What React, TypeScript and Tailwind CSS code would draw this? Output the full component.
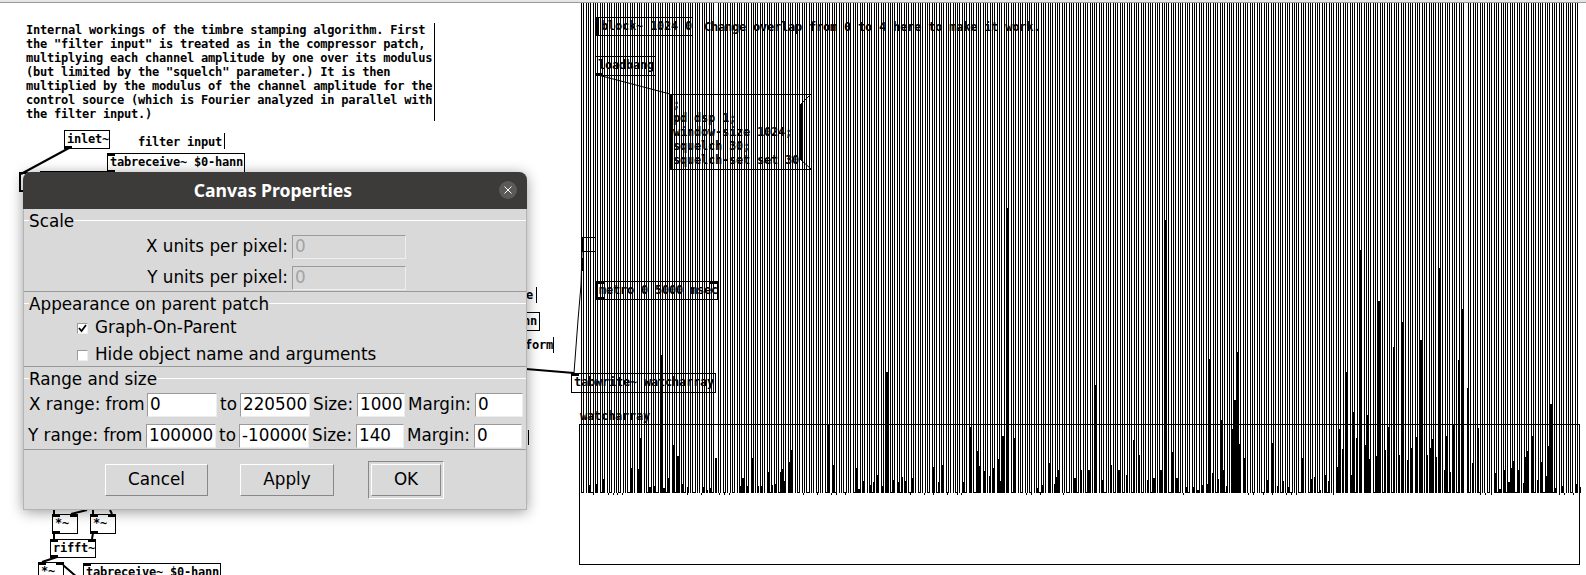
import { ReactNode } from "react";

// bars read off the reference: [x, top, width] in screen pixels
const tallBars: number[][] = [
  [660, 355, 2], [827, 424, 3], [886, 372, 3], [1006, 208, 3], [1095, 385, 2], [1164, 220, 3], [1208, 359, 2], [1234, 400, 2],
  [1236, 352, 2], [1346, 372, 2], [1352, 412, 2], [1359, 250, 3], [1366, 415, 2], [1378, 301, 2], [1379, 411, 2], [1393, 347, 2],
  [1401, 322, 3], [1420, 340, 2], [1439, 268, 2], [1458, 360, 2], [1462, 309, 2], [1467, 388, 2], [1550, 404, 2],
  [1074, 478, 2], [1080, 470, 2], [1088, 470, 2], [1102, 480, 2], [1110, 465, 2], [1118, 470, 2], [1126, 475, 2], [1133, 440, 2],
  [1138, 455, 2], [1147, 480, 2], [1153, 478, 2], [1160, 470, 2], [1172, 452, 2], [1176, 478, 2],
];

// same thing measured on the 3x crop at (570,410)
const leftBars: number[][] = [
  [58, 225], [75, 222], [100, 207], [183, 175], [200, 178], [210, 84], [238, 232], [252, 228], [280, 235],
  [295, 205], [310, 105], [322, 138], [337, 222], [352, 232], [395, 232], [407, 240], [421, 235], [434, 212],
  [436, 145], [506, 228], [517, 205], [532, 228], [547, 145], [560, 228], [574, 228], [590, 185], [602, 225],
  [616, 222], [630, 185], [632, 178], [643, 212], [657, 155], [659, 120], [785, 165], [855, 175], [865, 237],
  [880, 212], [897, 225], [908, 215], [922, 195], [935, 228], [965, 210], [980, 215], [992, 202], [1006, 212],
  [1022, 205], [1090, 172], [1103, 215], [1117, 165], [1175, 215], [1200, 50], [1217, 123], [1228, 168],
  [1243, 182], [1256, 198], [1270, 175], [1282, 148], [1286, 212], [1297, 78], [1328, 84], [1397, 235],
  [1412, 225], [1438, 160], [1452, 222], [1456, 200], [1465, 180],
];

// and on the 3x crop at (1180,380)
const rightBars: number[][] = [
  [14, 322], [40, 322], [52, 330], [67, 315], [80, 312], [95, 278], [110, 297], [120, 120], [125, 270], [137, 318],
  [152, 148], [165, 60], [178, 192], [193, 235], [262, 300], [277, 190], [290, 318], [305, 302], [320, 322],
  [362, 235], [390, 297], [403, 292], [416, 330], [431, 285], [445, 303], [470, 262], [473, 148], [485, 207],
  [512, 285], [515, 95], [527, 175], [553, 195], [557, 105], [568, 238], [584, 228], [598, 92], [612, 210],
  [625, 140], [640, 285], [653, 225], [680, 240], [694, 205], [708, 170], [737, 225], [750, 205], [752, 178],
  [764, 232], [792, 270], [795, 168], [806, 275], [820, 133], [833, 200], [862, 278], [875, 250], [890, 145],
  [945, 278], [958, 327], [972, 270], [985, 305], [990, 265], [1000, 243], [1012, 270], [1028, 310], [1032, 232],
  [1042, 212], [1056, 168], [1070, 300], [1084, 245], [1098, 288], [1100, 198], [1111, 72], [1126, 323],
  [1142, 318], [1184, 312], [1196, 320],
];

const ticksLeft = [70, 113, 128, 142, 155, 350, 392, 448, 462, 476, 698, 740, 783, 797, 825, 1020, 1062, 1090, 1132, 1160, 1172, 1367, 1382, 1410, 1480];
const ticksRight = [10, 205, 220, 248, 275, 317, 332, 347, 458, 900, 915, 932, 1137, 1152, 1180];

const bars = [
  ...tallBars,
  ...leftBars.map(([x, y]) => [570 + x / 3, 410 + y / 3, 2]),
  ...rightBars.map(([x, y]) => [1180 + x / 3, 380 + y / 3, 2]),
];

const lines = Array.from({ length: 430 }, (_, i) => Math.round(581 + i * 2.322)).filter(
  (x) => !(x > 714 && x < 718) && !(x > 1463 && x < 1467)
);

const Waveform = () => (
  <svg className="absolute left-0 top-0" width="1586" height="575" shapeRendering="crispEdges">
    {lines.map((x) => (
      <rect key={x} x={x} y={3} width={1} height={490} fill="#000" />
    ))}
    {lines.map((x, i) =>
      i % 4 === 0 ? <rect key={x} x={x} y={492} width={3} height={1} fill="#000" /> : null
    )}
    {bars.map(([x, y, w], i) => (
      <rect key={i} x={Math.round(x)} y={Math.round(y)} width={w} height={493 - Math.round(y)} fill="#000" />
    ))}
    {ticksLeft.map((x) => (
      <rect key={x} x={Math.round(570 + x / 3)} y={493} width={1} height={2} fill="#000" />
    ))}
    {ticksRight.map((x) => (
      <rect key={x} x={Math.round(1180 + x / 3)} y={493} width={1} height={2} fill="#000" />
    ))}
  </svg>
);

const Wires = () => (
  <svg className="absolute left-0 top-0" width="1586" height="575" fill="none" stroke="#000">
    <path d="M69 148 L21 174" strokeWidth="2" />
    <path d="M40 172 H108" strokeWidth="2" />
    <path d="M526 369 L574 373" strokeWidth="2" />
    <path d="M598 75 L670 94" strokeWidth="1" />
    <path d="M583 258 V271" strokeWidth="2" />
    <path d="M574 373 L578 320 L581 285 L582 252" strokeWidth="1" />
    <path d="M54 510 V514 M71 514 L87 510 M93 510 V514 M110 510 L112 514" strokeWidth="2" />
    <path d="M54 533 V539 M93 533 L92 539 M57 557 L42 562 M63 565 L78 578" strokeWidth="2" />
  </svg>
);

const Obj = ({ className, children }: { className: string; children?: ReactNode }) => (
  <div
    className={`absolute border border-black px-[2px] font-['DejaVu_Sans_Mono',monospace] text-[12px] font-bold leading-[17px] whitespace-pre tracking-[-0.22px] text-black ${className}`}
  >
    {children}
  </div>
);

const Nub = ({ className }: { className: string }) => (
  <span className={`absolute h-[3px] w-[7px] bg-black ${className}`} />
);

const Note = ({ className, children }: { className: string; children: ReactNode }) => (
  <div
    className={`absolute font-['DejaVu_Sans_Mono',monospace] text-[12px] font-bold leading-[14px] whitespace-pre tracking-[-0.22px] text-black ${className}`}
  >
    {children}
  </div>
);

const Patch = () => (
  <>
    <Note className="left-[26px] top-[23px] h-[98px] w-[409px] border-r border-black">
      {`Internal workings of the timbre stamping algorithm. First
the "filter input" is treated as in the compressor patch,
multiplying each channel amplitude by one over its modulus
(but limited by the "squelch" parameter.) It is then
multiplied by the modulus of the channel amplitude for the
control source (which is Fourier analyzed in parallel with
the filter input.)`}
    </Note>
    <Obj className="left-[64px] top-[130px] h-[19px] w-[46px]">
      inlet~
      <Nub className="-bottom-px left-0" />
    </Obj>
    <Note className="left-[138px] top-[133px] h-[16px] w-[87px] border-r border-black leading-[18px]">filter input</Note>
    <Obj className="left-[107px] top-[153px] h-[20px] w-[138px]">
      tabreceive~ $0-hann
      <Nub className="-top-px left-0" />
      <Nub className="-bottom-px left-0" />
    </Obj>
    <Obj className="left-[19px] top-[172px] h-[20px] w-[30px] border-2">*~</Obj>

    <Note className="left-[523px] top-[287px] h-[16px] w-[14px] border-r border-black pl-[3px] leading-[16px]">e</Note>
    <Obj className="left-[510px] top-[312px] h-[19px] w-[30px] text-right">nn</Obj>
    <Note className="left-[510px] top-[337px] h-[16px] w-[44px] border-r border-black text-right leading-[16px]">form</Note>
    <div className="absolute left-[528px] top-[430px] h-[15px] w-px bg-black" />

    <Obj className="left-[52px] top-[514px] h-[20px] w-[26px]">
      *~
      <Nub className="-top-px left-0" />
      <Nub className="-top-px right-0" />
      <Nub className="-bottom-px left-0" />
    </Obj>
    <Obj className="left-[90px] top-[514px] h-[20px] w-[26px]">
      *~
      <Nub className="-top-px left-0" />
      <Nub className="-top-px right-0" />
      <Nub className="-bottom-px left-0" />
    </Obj>
    <Obj className="left-[50px] top-[539px] h-[19px] w-[46px]">
      rifft~
      <Nub className="-top-px left-0" />
      <Nub className="-top-px right-0" />
      <Nub className="-bottom-px left-0" />
    </Obj>
    <Obj className="left-[38px] top-[562px] h-[20px] w-[26px]">
      *~
      <Nub className="-top-px left-0" />
      <Nub className="-top-px right-0" />
    </Obj>
    <Obj className="left-[83px] top-[563px] h-[20px] w-[138px]">
      tabreceive~ $0-hann
      <Nub className="-top-px left-0" />
    </Obj>

    <Obj className="left-[596px] top-[17px] h-[19px] w-[97px] border-l-[3px]">block~ 1024 0</Obj>
    <Note className="left-[704px] top-[20px]">Change overlap from 0 to 4 here to make it work.</Note>
    <Obj className="left-[596px] top-[56px] h-[20px] w-[60px] border-x-0 px-[1px]">
      loadbang
      <Nub className="-bottom-px left-0" />
    </Obj>
    <div className="absolute left-[670px] top-[94px] h-[76px] w-[141px] border-y border-l-[3px] border-black">
      <Note className="left-0 top-[2px]">{`;
pd dsp 1;
window-size 1024;
squelch 30;
squelch-set set 30`}</Note>
      <div className="absolute left-[127px] top-[9px] h-[56px] w-[2px] bg-black" />
    </div>
    <svg className="absolute left-[795px] top-[90px]" width="20" height="84" fill="none" stroke="#000">
      <path d="M16 4 L6 14 M6 70 L16 79" />
    </svg>
    <Obj className="left-[581px] top-[237px] h-[15px] w-[15px] border-l-2" />
    <Obj className="left-[596px] top-[281px] h-[19px] w-[122px] px-[1px]">
      metro 0 5000 msec
      <Nub className="-top-px left-0" />
      <Nub className="-top-px right-0" />
      <Nub className="-bottom-px left-0" />
    </Obj>
    <Obj className="left-[571px] top-[373px] h-[20px] w-[145px]">
      tabwrite~ watcharray
      <Nub className="-top-px left-0" />
    </Obj>
    <Note className="left-[580px] top-[409px]">watcharray</Note>
    <div className="absolute left-[579px] top-[424px] h-[141px] w-[1001px] border border-black" />
  </>
);

const Section = ({ title, className, children }: { title: string; className: string; children: ReactNode }) => (
  <section className={`flex flex-col border-b border-[#999999] ${className}`}>
    <div className="flex h-[22px] items-center">
      <span className="w-[5px] self-center border-t border-white" />
      <span className="relative top-[1px] leading-none">{title}</span>
      <span className="flex-1 border-t border-white" />
    </div>
    {children}
  </section>
);

const Field = ({ value, className, disabled }: { value: string; className: string; disabled?: boolean }) => (
  <input
    readOnly
    value={value}
    className={`h-[24px] border border-b-[#eeeeee] border-l-[#9a9a9a] border-r-[#eeeeee] border-t-[#9a9a9a] px-[2px] outline-none ${
      disabled ? "bg-[#d9d9d9] text-[#a3a3a3]" : "bg-white text-black"
    } ${className}`}
  />
);

const ScaleRow = ({ label }: { label: string }) => (
  <div className="flex w-[382px] items-center justify-end gap-[4px]">
    <span>{label}</span>
    <Field value="0" disabled className="w-[114px]" />
  </div>
);

const Check = ({ label, checked }: { label: string; checked?: boolean }) => (
  <label className="flex h-[22px] items-center gap-[7px] pl-[53px]">
    <span className="flex size-[11px] items-center justify-center border border-b-[#eeeeee] border-l-[#9a9a9a] border-r-[#eeeeee] border-t-[#9a9a9a] bg-white">
      {checked && (
        <svg width="9" height="9" viewBox="0 0 9 9" fill="none" stroke="#000" strokeWidth="1.8">
          <path d="M1 4 L3.5 7 L8 1" />
        </svg>
      )}
    </span>
    {label}
  </label>
);

const RangeRow = ({ axis, className, v }: { axis: string; className: string; v: string[] }) => (
  <div className={`flex items-center ${className}`}>
    <span className="w-[118px] whitespace-nowrap">{axis} range: from</span>
    <Field value={v[0]} className="w-[70px]" />
    <span className="w-[23px] text-center">to</span>
    <Field value={v[1]} className="w-[70px]" />
    <span className="w-[47px] pl-[3px]">Size:</span>
    <Field value={v[2]} className="w-[48px]" />
    <span className="w-[70px] pl-[3px]">Margin:</span>
    <Field value={v[3]} className="w-[48px]" />
  </div>
);

const Btn = ({ children, className }: { children: ReactNode; className: string }) => (
  <button className={`h-[32px] border border-b-[#888888] border-l-white border-r-[#888888] border-t-white bg-[#d9d9d9] ${className}`}>
    {children}
  </button>
);

const Dialog = () => (
  <div className="absolute left-[23px] top-[172px] flex h-[338px] w-[504px] flex-col rounded-t-[8px] border-x border-b border-[#b4b4b4] bg-[#d9d9d9] font-['DejaVu_Sans',sans-serif] text-[16.8px] text-black shadow-[0_2px_14px_rgba(0,0,0,0.4)]">
    <header className="relative -mx-px flex h-[37px] shrink-0 items-center justify-center rounded-t-[8px] bg-[#3c3b39]">
      <h1 className="relative -left-[2px] font-['Noto_Sans',sans-serif] text-[17.6px] font-bold text-white">Canvas Properties</h1>
      <span className="absolute right-[10px] top-[9px] flex size-[18px] items-center justify-center rounded-full bg-[#5a5a58]">
        <svg width="8" height="8" viewBox="0 0 8 8" stroke="#fff" strokeWidth="1">
          <path d="M0.5 0.5 L7.5 7.5 M7.5 0.5 L0.5 7.5" />
        </svg>
      </span>
    </header>
    <Section title="Scale" className="h-[83px]">
      <div className="flex flex-col gap-[6px] pt-[3px]">
        <ScaleRow label="X units per pixel:" />
        <ScaleRow label="Y units per pixel:" />
      </div>
    </Section>
    <Section title="Appearance on parent patch" className="h-[75px]">
      <div className="flex flex-col gap-[5px] pt-[3px]">
        <Check label="Graph-On-Parent" checked />
        <Check label="Hide object name and arguments" />
      </div>
    </Section>
    <Section title="Range and size" className="h-[83px]">
      <div className="flex flex-col gap-[6px] pt-[3px]">
        <RangeRow axis="X" className="pl-[5px]" v={["0", "220500", "1000", "0"]} />
        <RangeRow axis="Y" className="pl-[4px]" v={["100000", "-100000", "140", "0"]} />
      </div>
    </Section>
    <footer className="flex flex-1 items-center pl-[81px]">
      <Btn className="w-[103px]">Cancel</Btn>
      <Btn className="ml-[32px] w-[94px]">Apply</Btn>
      <div className="ml-[34px] border border-b-white border-l-[#888888] border-r-white border-t-[#888888] p-[2px]">
        <Btn className="block w-[70px]">OK</Btn>
      </div>
    </footer>
  </div>
);

export default function App() {
  return (
    <div className="relative h-[575px] w-[1586px] overflow-hidden bg-white">
      <div className="h-[3px] border-b border-[#999999] bg-[#e6e6e6]" />
      <Waveform />
      <Wires />
      <Patch />
      <Dialog />
    </div>
  );
}
